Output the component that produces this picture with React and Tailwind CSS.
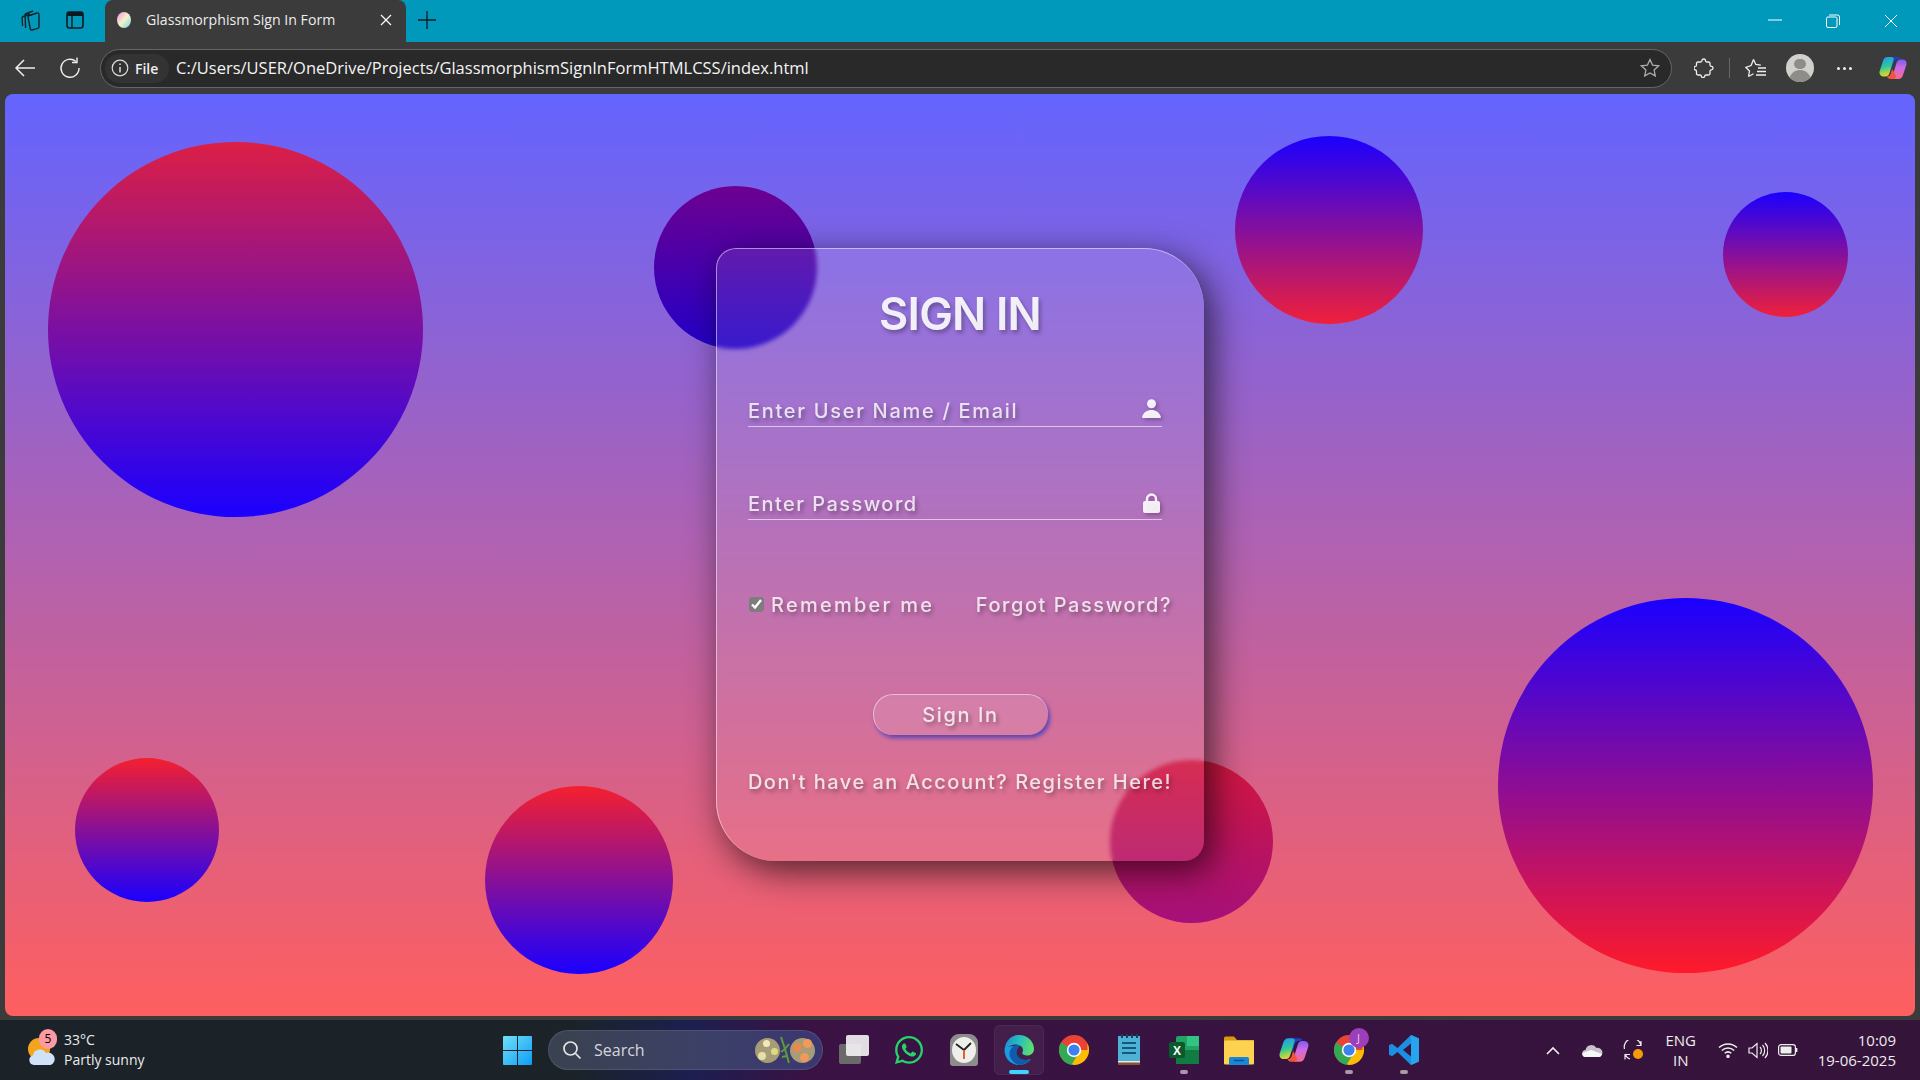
import React from 'react';
import { FaWhatsapp } from 'react-icons/fa';

const uiFont = "[font-family:'Open_Sans','Noto_Sans',sans-serif]";

// decorative balls behind the card
function Balls() {
  return (
    <>
      <div className="absolute left-[43px] top-[48px] w-[375px] h-[375px] rounded-full bg-linear-to-b/srgb from-[#dc1f45] to-[#1a00ff]"></div>
      <div className="absolute left-[649px] top-[92px] w-[163px] h-[163px] rounded-full bg-linear-to-b/srgb from-[#6d0090] to-[#2200c8]"></div>
      <div className="absolute left-[1230px] top-[42px] w-[188px] h-[188px] rounded-full bg-linear-to-b/srgb from-[#1a00ff] to-[#f0203a]"></div>
      <div className="absolute left-[1718px] top-[98px] w-[125px] h-[125px] rounded-full bg-linear-to-b/srgb from-[#1a00ff] to-[#f0203a]"></div>
      <div className="absolute left-[1493px] top-[504px] w-[375px] h-[375px] rounded-full bg-linear-to-b/srgb from-[#1a00ff] to-[#ff1a2a]"></div>
      <div className="absolute left-[70px] top-[664px] w-[144px] h-[144px] rounded-full bg-linear-to-b/srgb from-[#f5202f] to-[#1a00ff]"></div>
      <div className="absolute left-[480px] top-[692px] w-[188px] h-[188px] rounded-full bg-linear-to-b/srgb from-[#f5202f] to-[#1a00ff]"></div>
      <div className="absolute left-[1105px] top-[666px] w-[163px] h-[163px] rounded-full bg-linear-to-b/srgb from-[#d2163f] to-[#a5107a]"></div>
    </>
  );
}

function SignInCard() {
  const glow = '[text-shadow:2px_3px_4px_rgba(0,0,0,0.35)]';
  return (
    <div className="relative -mt-[2px] w-[488px] h-[613px] pl-[31px] rounded-tl-[20px] rounded-tr-[60px] rounded-br-[20px] rounded-bl-[60px] border-t border-l border-white/50 bg-white/10 backdrop-blur-[2px] shadow-[8px_10px_35px_rgba(0,0,0,0.65)] [font-family:Inter,sans-serif] text-white/80">
      <h1 className="mt-[40px] h-[50px] w-[424px] flex items-center justify-center text-[45px] leading-none font-semibold text-white/90 tracking-[-0.8px] [text-shadow:2px_3px_4px_rgba(0,0,0,0.3)]">SIGN IN</h1>
      <div className={`mt-[53px] w-[414px] h-[35px] flex items-center justify-between border-b border-white/60 text-[20px] font-medium ${glow}`}>
        <span className="tracking-[1.7px] mt-[4px]">Enter User Name / Email</span>
        <svg width="19" height="19" viewBox="0 0 19 19" className="mr-[1px] fill-white/90 drop-shadow-[2px_2px_2px_rgba(0,0,0,0.3)]">
          <circle cx="9.5" cy="4.7" r="4.5" />
          <path d="M1.4 19C.4 19-.2 18.3.2 17.4 1.7 13.4 5 11 9.5 11s7.8 2.4 9.3 6.4c.4.9-.2 1.6-1.2 1.6Z" />
        </svg>
      </div>
      <div className={`mt-[58px] w-[414px] h-[35px] flex items-center justify-between border-b border-white/60 text-[20px] font-medium ${glow}`}>
        <span className="tracking-[1.45px] mt-[4px]">Enter Password</span>
        <svg width="17" height="20" viewBox="0 0 17 20" className="mr-[2px] mt-[3px] drop-shadow-[2px_2px_2px_rgba(0,0,0,0.3)]">
          <path d="M4 9V6a4.5 4.5 0 0 1 9 0v3" fill="none" stroke="rgba(255,255,255,0.9)" strokeWidth="2.4" />
          <rect x="0" y="8" width="17" height="12" rx="2" fill="rgba(255,255,255,0.9)" />
        </svg>
      </div>
      <div className={`mt-[70px] w-[424px] h-[30px] flex items-center justify-between text-[20px] font-medium ${glow}`}>
        <label className="flex items-center">
          <input type="checkbox" defaultChecked className="ml-[1px] w-[15px] h-[15px] accent-[#7f7c80]" />
          <span className="ml-[7px] tracking-[2.25px]">Remember me</span>
        </label>
        <span className="tracking-[1.55px]">Forgot Password?</span>
      </div>
      <div className="mt-[74px] w-[424px] flex justify-center">
        <button className={`w-[175px] h-[41px] rounded-[20px] border-t border-l border-white/50 bg-white/10 shadow-[2px_3px_4px_#5a45b5] text-[20px] font-medium tracking-[1.6px] ${glow}`}>Sign In</button>
      </div>
      <p className={`mt-[32px] w-[424px] h-[30px] flex items-center justify-center whitespace-nowrap text-[20px] font-medium tracking-[1.5px] ${glow}`}>Don't have an Account? Register Here!</p>
    </div>
  );
}

function TabStrip() {
  return (
    <div className="h-[42px] shrink-0 bg-[#0099bc] flex items-end text-white">
      <div className="w-[105px] h-[42px] flex items-center pb-[2px]">
        <svg width="22" height="24" viewBox="0 0 22 24" fill="none" stroke="#10232b" strokeWidth="1.4" className="ml-[20px]">
          <path d="M8 8l9-3a1.5 1.5 0 0 1 2 1.4V19a1.5 1.5 0 0 1-1.2 1.4L12 22a1.5 1.5 0 0 1-1.8-1.4L8 9Z" />
          <path d="M5 6l8-3M2 9l.6 9M5 6l.6 14M2 9l8-3" />
        </svg>
        <svg width="18" height="18" viewBox="0 0 18 18" className="ml-[24px]">
          <rect x="1" y="1" width="16" height="16" rx="2.5" fill="none" stroke="#0b1a20" strokeWidth="1.6" />
          <path d="M1 3.5A2.5 2.5 0 0 1 3.5 1h11A2.5 2.5 0 0 1 17 3.500V5H1Z" fill="#0b1a20" />
          <path d="M6 5v12" stroke="#0b1a20" strokeWidth="1.4" />
        </svg>
      </div>
      <div className="w-[301px] h-[42px] pb-[2px] rounded-t-[8px] bg-[#3b3b3b] flex items-center">
        <svg width="16" height="18" viewBox="0 0 16 18" className="ml-[11px]">
          <defs>
            <linearGradient id="fav" x1="0" y1="0" x2="1" y2="1">
              <stop offset="0" stopColor="#f08fe0" />
              <stop offset="0.5" stopColor="#f7f2c8" />
              <stop offset="1" stopColor="#6fd5e8" />
            </linearGradient>
          </defs>
          <ellipse cx="8" cy="9" rx="7" ry="8" fill="url(#fav)" />
        </svg>
        <span className={`ml-[14px] text-[14.15px] text-[#ececec] ${uiFont}`}>Glassmorphism Sign In Form</span>
        <svg width="12" height="12" viewBox="0 0 12 12" stroke="white" strokeWidth="1.2" className="ml-auto mr-[14px]">
          <path d="M1 1l10 10M11 1L1 11" />
        </svg>
      </div>
      <div className="h-[42px] pb-[2px] flex items-center">
        <svg width="18" height="18" viewBox="0 0 18 18" stroke="#0b1a20" strokeWidth="1.3" className="ml-[12px]">
          <path d="M9 0v18M0 9h18" />
        </svg>
      </div>
      <div className="ml-auto h-[42px] flex items-center">
        <svg width="14" height="2" viewBox="0 0 14 2" className="mr-[44px] -mt-[2px]"><path d="M0 1h14" stroke="white" strokeWidth="1" /></svg>
        <svg width="14" height="14" viewBox="0 0 14 14" fill="none" stroke="white" strokeWidth="1" className="mr-[44px]">
          <rect x="0.500" y="3" width="10.500" height="10.500" rx="1.500" />
          <path d="M3 1h8.500A2 2 0 0 1 13.500 3v8" />
        </svg>
        <svg width="14" height="14" viewBox="0 0 14 14" stroke="white" strokeWidth="1" className="mr-[22px]">
          <path d="M1 1l12 12M13 1L1 13" />
        </svg>
      </div>
    </div>
  );
}

function Toolbar() {
  return (
    <div className="h-[52px] shrink-0 bg-[#3b3b3b] flex items-center text-white">
      <svg width="22" height="20" viewBox="0 0 22 20" fill="none" stroke="#eee" strokeWidth="1.5" className="ml-[14px]">
        <path d="M21 10H2M10 2l-8 8 8 8" />
      </svg>
      <svg width="22" height="22" viewBox="0 0 22 22" fill="none" stroke="#eee" strokeWidth="1.4" className="ml-[23px]">
        <path d="M17 4.500A9 9 0 1 0 20 11" />
        <path d="M18 0.500v5h-5" />
      </svg>
      <div className="ml-[19px] w-[1572px] h-[39px] rounded-full bg-[#292929] border-[1.5px] border-[#666] flex items-center">
        <div className="ml-[4px] w-[64px] h-[29px] rounded-full bg-[#333] flex items-center">
          <svg width="18" height="18" viewBox="0 0 18 18" fill="none" stroke="#ddd" strokeWidth="1.2" className="ml-[6px]">
            <circle cx="9" cy="9" r="7.800" />
            <path d="M9 8v5.500M9 4.500v1.500" strokeWidth="1.500" />
          </svg>
          <span className="ml-[6px] text-[14px] font-semibold [font-family:'Open_Sans',sans-serif] text-[#eee]">File</span>
        </div>
        <span className="ml-[7px] text-[16.5px] whitespace-nowrap text-[#f4f4f4] [font-family:'Open_Sans',sans-serif]">C:/Users/USER/OneDrive/Projects/GlassmorphismSignInFormHTMLCSS/index.html</span>
        <svg width="20" height="20" viewBox="0 0 20 20" fill="none" stroke="#aaa" strokeWidth="1.300" className="ml-auto mr-[11px]">
          <path d="M10 1.500l2.600 5.600 6 .7-4.500 4.100 1.200 6L10 15l-5.300 2.900 1.200-6L1.400 7.800l6-.7Z" />
        </svg>
      </div>
      <svg width="20" height="20" viewBox="0 0 20 20" fill="none" stroke="#eee" strokeWidth="1.300" className="ml-[22px]">
        <path d="M8 2.500c0-2 3.500-2 3.500 0 0 1 .5 1.500 1.500 1.500h1.500c1 0 1.500.5 1.500 1.500V7c0 1 .8 1.300 1.500 1.300 2 0 2 3.500 0 3.500-.7 0-1.500.3-1.500 1.300v2.400c0 1-.5 1.500-1.500 1.500H12c-1 0-1.300.6-1.300 1.300 0 1.600-3.400 1.600-3.400 0 0-.7-.3-1.300-1.300-1.300H4c-1 0-1.500-.5-1.500-1.500v-2.200c0-1-.6-1.300-1.200-1.300-1.700 0-1.700-3.600 0-3.600.6 0 1.200-.3 1.200-1.300V5.500C2.500 4.500 3 4 4 4h2.500C7.500 4 8 3.500 8 2.500Z" />
      </svg>
      <div className="ml-[15px] w-[1px] h-[20px] bg-[#666]"></div>
      <svg width="22" height="20" viewBox="0 0 22 20" fill="none" stroke="#eee" strokeWidth="1.300" className="ml-[15px]">
        <path d="M8.500 1.500l2.300 5 5 .6M3.500 18.500l1-5.500L.800 9.300l5.300-1.800 2.400-6M3.500 18.500l5-2.800" />
        <path d="M13 10h8M12 13.500h9M11 17h10" />
      </svg>
      <div className="ml-[19px] w-[28px] h-[28px] rounded-full bg-[#d2d0cc] overflow-hidden flex flex-col items-center">
        <div className="mt-[5px] w-[12px] h-[12px] rounded-full bg-[#8f8d89]"></div>
        <div className="mt-[1px] w-[22px] h-[14px] rounded-t-full bg-[#8f8d89]"></div>
      </div>
      <div className="ml-[23px] flex gap-[3px]">
        <div className="w-[3px] h-[3px] rounded-full bg-[#eee]"></div>
        <div className="w-[3px] h-[3px] rounded-full bg-[#eee]"></div>
        <div className="w-[3px] h-[3px] rounded-full bg-[#eee]"></div>
      </div>
      <div className="ml-[27px]"><CopilotIcon size={28} id="cp1" /></div>
    </div>
  );
}

function CopilotIcon({ size, id }) {
  return (
    <svg width={size} height={size} viewBox="0 0 28 28">
      <defs>
        <linearGradient id={`${id}a`} x1="0.300" y1="0" x2="0.500" y2="1">
          <stop offset="0" stopColor="#1f9cf0" />
          <stop offset="0.500" stopColor="#2fc79a" />
          <stop offset="0.800" stopColor="#a6d846" />
          <stop offset="1" stopColor="#f7c83a" />
        </linearGradient>
        <linearGradient id={`${id}b`} x1="0.500" y1="0" x2="0.500" y2="1">
          <stop offset="0" stopColor="#7a5cf0" />
          <stop offset="0.400" stopColor="#c96ae8" />
          <stop offset="1" stopColor="#f86a8a" />
        </linearGradient>
      </defs>
      <path d="M10 3h9c1.500 0 2.500.8 3 2l-4 .5c-2 .3-3 1.500-3.500 3.500l-2 7L9 8Z" fill="#1f3fc4" />
      <path d="M8.500 3h4c1.800 0 2.500 1.500 2 3L10.500 19c-.5 2-2 3.500-4 3.500H4.500c-3 0-4.700-2.500-3.800-5.500L4 7c.7-2.500 2.500-4 4.500-4Z" fill={`url(#${id}a)`} />
      <path d="M19.500 25h-4c-1.800 0-2.500-1.500-2-3l4-13c.5-2 2-3.500 4-3.500h2c3 0 4.700 2.500 3.800 5.500L24 21c-.7 2.500-2.500 4-4.500 4Z" fill={`url(#${id}b)`} />
      <path d="M8 22.500c2 0 3-1 3.600-2.500l1.600-5 3.800 7-1 3H11c-1.500 0-2.500-1-3-2.500Z" fill="#f0553a" />
    </svg>
  );
}

function ChromeIcon() {
  return (
    <svg width="30" height="30" viewBox="0 0 30 30">
      <circle cx="15" cy="15" r="15" fill="#ea4335" />
      <path d="M15 15L2 7.500A15 15 0 0 0 15 30l7.500-13Z" fill="#34a853" />
      <path d="M15 15h13.500L28.300 8A15 15 0 0 1 15 30l-2-1 8-13Z" fill="#fbbc04" />
      <circle cx="15" cy="15" r="7.200" fill="#fff" />
      <circle cx="15" cy="15" r="5.600" fill="#3b82f0" />
    </svg>
  );
}

function EdgeIcon() {
  return (
    <svg width="30" height="30" viewBox="0 0 30 30">
      <defs>
        <linearGradient id="edgeA" x1="0" y1="0.300" x2="1" y2="0.500">
          <stop offset="0" stopColor="#1a8fd8" />
          <stop offset="0.500" stopColor="#2bc0b8" />
          <stop offset="1" stopColor="#5fe06a" />
        </linearGradient>
      </defs>
      <path d="M1 12A14.500 14.500 0 0 0 15 30c5 0 9.500-2.500 12-6-6 2-12 1-14.500-3.500C10.500 16.500 12.500 11.500 17 10Z" fill="#1b9ae8" />
      <path d="M14 9.500C8 10.500 4 16 6 22c1.500 4 5 7 9 8 4 0 9-2.500 12-6-5 2-11 1-13.500-3.500-2-4 0-9 4.500-10.500-1-.7-2-.8-3.500-.5Z" fill="#0f5cab" />
      <path d="M.8 13C2 5 8 0 15 0c8 0 15 6 15 14 0 4-3 6.500-7 6.500-2.500 0-4.500-1-5-2.500 2-2 1-6-2-7.500-3-1.500-7-1-10 .5-3 1.500-4.700 3-5.200 2Z" fill="url(#edgeA)" />
    </svg>
  );
}

function Taskbar() {
  const cell = 'w-[55px] h-[50px] flex items-center justify-center relative';
  const dot = 'absolute bottom-[1px] w-[8px] h-[4px] rounded-full bg-[#a79aa8]';
  return (
    <div className="h-[60px] shrink-0 flex items-center text-white [font-family:'Open_Sans',sans-serif] bg-[linear-gradient(90deg,#1b2329_0%,#1b2329_30%,#1c1f50_36%,#3a1244_42%,#35143a_100%)]">
      {/* weather */}
      <div className="ml-[28px] w-[475px] flex items-center">
        <div className="relative w-[28px] h-[30px]">
          <div className="absolute left-0 top-[3px] w-[22px] h-[22px] rounded-full bg-[#f4a51e]"></div>
          <svg width="28" height="18" viewBox="0 0 28 18" className="absolute left-0 bottom-[-1px]">
            <path d="M6 17a5 5 0 0 1-1-9.800A7 7 0 0 1 18 5a5.500 5.500 0 0 1 4.500 12Z" fill="#cfe2f7" />
          </svg>
          <div className="absolute left-[11px] top-[-6px] w-[18px] h-[20px] rounded-full bg-[#fb9aa4] text-black text-[12px] leading-[20px] text-center">5</div>
        </div>
        <div className="ml-[8px] flex flex-col text-[14px] leading-[20px] text-[#ececec]">
          <span>33°C</span>
          <span>Partly sunny</span>
        </div>
      </div>
      {/* start */}
      <svg width="29" height="29" viewBox="0 0 29 29" className="shrink-0">
        <defs>
          <linearGradient id="win" x1="0" y1="0" x2="1" y2="1">
            <stop offset="0" stopColor="#6fe0f7" />
            <stop offset="1" stopColor="#0f9bf5" />
          </linearGradient>
        </defs>
        <path d="M0 1a1 1 0 0 1 1-1h13v14H0ZM15 0h13a1 1 0 0 1 1 1v13H15ZM0 15h14v14H1a1 1 0 0 1-1-1ZM15 15h14v13a1 1 0 0 1-1 1H15Z" fill="url(#win)" />
      </svg>
      {/* search */}
      <div className="ml-[16px] w-[275px] h-[40px] rounded-full border border-white/10 bg-[linear-gradient(90deg,#39424f,#3c4068_60%,#3c3670)] flex items-center shrink-0">
        <svg width="20" height="20" viewBox="0 0 20 20" fill="none" stroke="#e6e6e6" strokeWidth="1.700" className="ml-[13px]">
          <circle cx="8.500" cy="8.500" r="6.500" />
          <path d="M13.500 13.500L18.500 18.500" />
        </svg>
        <span className="ml-[12px] text-[16px] text-[#d6d6dc]">Search</span>
        <div className="ml-auto mr-[7px] flex items-center">
          <div className="relative w-[25px] h-[25px] rounded-full bg-[#a79c78]">
            <div className="absolute left-[8px] top-[2px] w-[7px] h-[7px] rounded-full bg-[#f2e9b8]"></div>
            <div className="absolute left-[3px] top-[14px] w-[8px] h-[8px] rounded-full bg-[#e6e0a6]"></div>
            <div className="absolute left-[16px] top-[10px] w-[7px] h-[7px] rounded-full bg-[#dcdc7c]"></div>
          </div>
          <svg width="10" height="28" viewBox="0 0 10 28" fill="none" stroke="#5c9a40" strokeWidth="2">
            <path d="M1 1l4 12 4 14M5 13l4-5M5 13l-4 3M7 20l-5 1" />
          </svg>
          <div className="relative w-[25px] h-[25px] rounded-full bg-[#a79c78]">
            <div className="absolute left-[13px] top-[1px] w-[9px] h-[9px] rounded-full bg-[#ef9a58]"></div>
            <div className="absolute left-[3px] top-[5px] w-[9px] h-[9px] rounded-full bg-[#e98a4c]"></div>
            <div className="absolute left-[10px] top-[15px] w-[9px] h-[9px] rounded-full bg-[#ef9a58]"></div>
          </div>
        </div>
      </div>
      {/* pinned apps */}
      <div className="ml-[3px] flex items-center">
        <div className={cell}>
          <div className="relative w-[30px] h-[30px]">
            <div className="absolute left-0 top-[9px] w-[22px] h-[20px] rounded-[2px] bg-[#6a6a6a]"></div>
            <div className="absolute left-[7px] top-0 w-[23px] h-[21px] rounded-[2px] bg-[#f4f4f4]/90"></div>
          </div>
        </div>
        <div className={cell}><FaWhatsapp className="w-[32px] h-[32px] text-[#25d366]" /></div>
        <div className={cell}>
          <svg width="30" height="34" viewBox="0 0 30 34">
            <path d="M4 33a3 3 0 0 1-3-3V9a9 9 0 0 1 9-8h10a9 9 0 0 1 9 8v21a3 3 0 0 1-3 3Z" fill="#8c8c8c" />
            <ellipse cx="15" cy="17" rx="12" ry="13" fill="#eeeeea" />
            <path d="M15 17L7 11M15 17l7-7" stroke="#222" strokeWidth="1.800" />
            <path d="M15 17v9" stroke="#e0541f" strokeWidth="1.800" />
          </svg>
        </div>
        <div className={cell}>
          <div className="absolute w-[50px] h-[50px] rounded-[6px] bg-white/5 border border-white/5"></div>
          <div className="relative"><EdgeIcon /></div>
          <div className="absolute bottom-[1px] w-[20px] h-[4px] rounded-full bg-[#3ed4ff]"></div>
        </div>
        <div className={cell}><ChromeIcon /></div>
        <div className={cell}>
          <svg width="22" height="32" viewBox="0 0 22 32">
            <rect x="0" y="2" width="22" height="27" fill="#4db2d6" />
            <rect x="0" y="28" width="22" height="3" fill="#8a5230" />
            <rect x="0" y="27" width="22" height="1.500" fill="#e8e8e8" />
            <path d="M4 0v4M9 0v4M14 0v4M19 0v4" stroke="#14405a" strokeWidth="2" />
            <path d="M4 9h14M4 14h14M4 19h14" stroke="#14597a" strokeWidth="2" />
          </svg>
        </div>
        <div className={cell}>
          <svg width="30" height="30" viewBox="0 0 30 30">
            <rect x="7" y="1" width="23" height="28" rx="2" fill="#21a366" />
            <rect x="18" y="1" width="12" height="10" fill="#33c481" />
            <rect x="7" y="15" width="23" height="14" fill="#107c41" />
            <rect x="0" y="7" width="16" height="16" rx="2" fill="#0b5a2e" />
            <text x="8" y="19.500" textAnchor="middle" fontSize="12" fontWeight="700" fill="#fff" fontFamily="Liberation Sans">X</text>
          </svg>
          <div className={dot}></div>
        </div>
        <div className={cell}>
          <svg width="30" height="30" viewBox="0 0 30 30">
            <path d="M0 3a1.500 1.500 0 0 1 1.500-1.500H10L13 5h17v4H0Z" fill="#d99a0b" />
            <rect x="0" y="5.500" width="30" height="24" rx="1" fill="#fcd250" />
            <rect x="5" y="22" width="20" height="8" rx="1.500" fill="#1a87d6" />
            <path d="M10 25.500h10" stroke="#0e4f8c" strokeWidth="1.500" />
          </svg>
        </div>
        <div className={cell}><CopilotIcon size={30} id="cp2" /></div>
        <div className={cell}>
          <div className="relative w-[30px] h-[30px]">
            <ChromeIcon />
            <div className="absolute left-[15px] top-[-7px] w-[20px] h-[20px] rounded-full bg-[#9c3fb8] text-[11px] leading-[20px] text-center text-[#e8c9ef]">J</div>
          </div>
          <div className={dot}></div>
        </div>
        <div className={cell}>
          <svg width="30" height="30" viewBox="0 0 30 30">
            <path d="M22 0l8 3.500v23L22 30 8.500 17l-5.500 4.300-3-1.500v-9.600l3-1.500 5.500 4.300Zm0 8.500L14 15l8 6.500Z" fill="#1d8fe0" />
            <path d="M22 0l8 3.500v23L22 30Z" fill="#28a4ef" />
          </svg>
          <div className={dot}></div>
        </div>
      </div>
      {/* tray */}
      <div className="ml-auto flex items-center pr-[24px]">
        <div className="w-[40px] flex justify-center">
          <svg width="14" height="9" viewBox="0 0 14 9" fill="none" stroke="#eee" strokeWidth="1.600"><path d="M1 8l6-6 6 6" /></svg>
        </div>
        <div className="w-[40px] flex justify-center">
          <svg width="21" height="13" viewBox="0 0 21 13">
            <path d="M4 13a3.500 3.500 0 0 1-.5-7A6 6 0 0 1 14.500 4 4.500 4.500 0 0 1 17 13Z" fill="#c9c2cc" />
            <path d="M4 13c-3 0-4-2-3.500-4L9 6l11 4c-.5 2-1.500 3-3 3Z" fill="#f7f7f7" />
          </svg>
        </div>
        <div className="w-[40px] flex justify-center">
          <div className="relative w-[20px] h-[21px]">
            <svg width="20" height="21" viewBox="0 0 20 21" fill="none" stroke="#eee" strokeWidth="1.200">
              <path d="M1.500 9A8 8 0 0 1 18 5M18 1v4.500h-4.500M2 14a8 8 0 0 0 5 5M2 19.500V14.500h5" />
            </svg>
            <div className="absolute left-[10px] top-[9px] w-[10px] h-[10px] rounded-full bg-[#f59b0a]"></div>
          </div>
        </div>
        <div className="w-[56px] flex flex-col items-center text-[15px] leading-[20px] text-[#ececec]">
          <span>ENG</span>
          <span>IN</span>
        </div>
        <div className="ml-[4px] w-[30px] flex justify-center">
          <svg width="20" height="16" viewBox="0 0 20 16" fill="none" stroke="#eee" strokeWidth="1.500">
            <path d="M1 5.500a13 13 0 0 1 18 0M3.800 8.500a9 9 0 0 1 12.400 0M6.700 11.300a5 5 0 0 1 6.600 0" />
            <circle cx="10" cy="14.300" r="1" fill="#eee" />
          </svg>
        </div>
        <div className="w-[30px] flex justify-center">
          <svg width="20" height="17" viewBox="0 0 20 17" fill="none" stroke="#eee" strokeWidth="1.200">
            <path d="M1 6h3l5-4.500v14L4 11H1Z" />
            <path d="M12 5a5 5 0 0 1 0 7M14.500 3a8 8 0 0 1 0 11M17 1a11 11 0 0 1 0 15" />
          </svg>
        </div>
        <div className="w-[30px] flex justify-center">
          <svg width="20" height="12" viewBox="0 0 20 12">
            <rect x="0.600" y="0.600" width="16.800" height="10.800" rx="2.500" fill="none" stroke="#eee" strokeWidth="1.200" />
            <rect x="2.500" y="2.500" width="11" height="7" rx="1" fill="#eee" />
            <path d="M18.600 4v4" stroke="#eee" strokeWidth="1.500" />
          </svg>
        </div>
        <div className="ml-[15px] flex flex-col items-end text-[15px] leading-[20px] text-[#ececec]">
          <span>10:09</span>
          <span>19-06-2025</span>
        </div>
      </div>
    </div>
  );
}

export default function App() {
  return (
    <div className="w-[1920px] h-[1080px] flex flex-col overflow-hidden bg-[#3b3b3b]">
      <TabStrip />
      <Toolbar />
      <div className="relative flex-1 mx-[5px] mb-[4px] rounded-[8px] overflow-hidden flex items-center justify-center bg-linear-to-b/srgb from-[#6464ff] to-[#ff5f5f]">
        <Balls />
        <SignInCard />
      </div>
      <Taskbar />
    </div>
  );
}
